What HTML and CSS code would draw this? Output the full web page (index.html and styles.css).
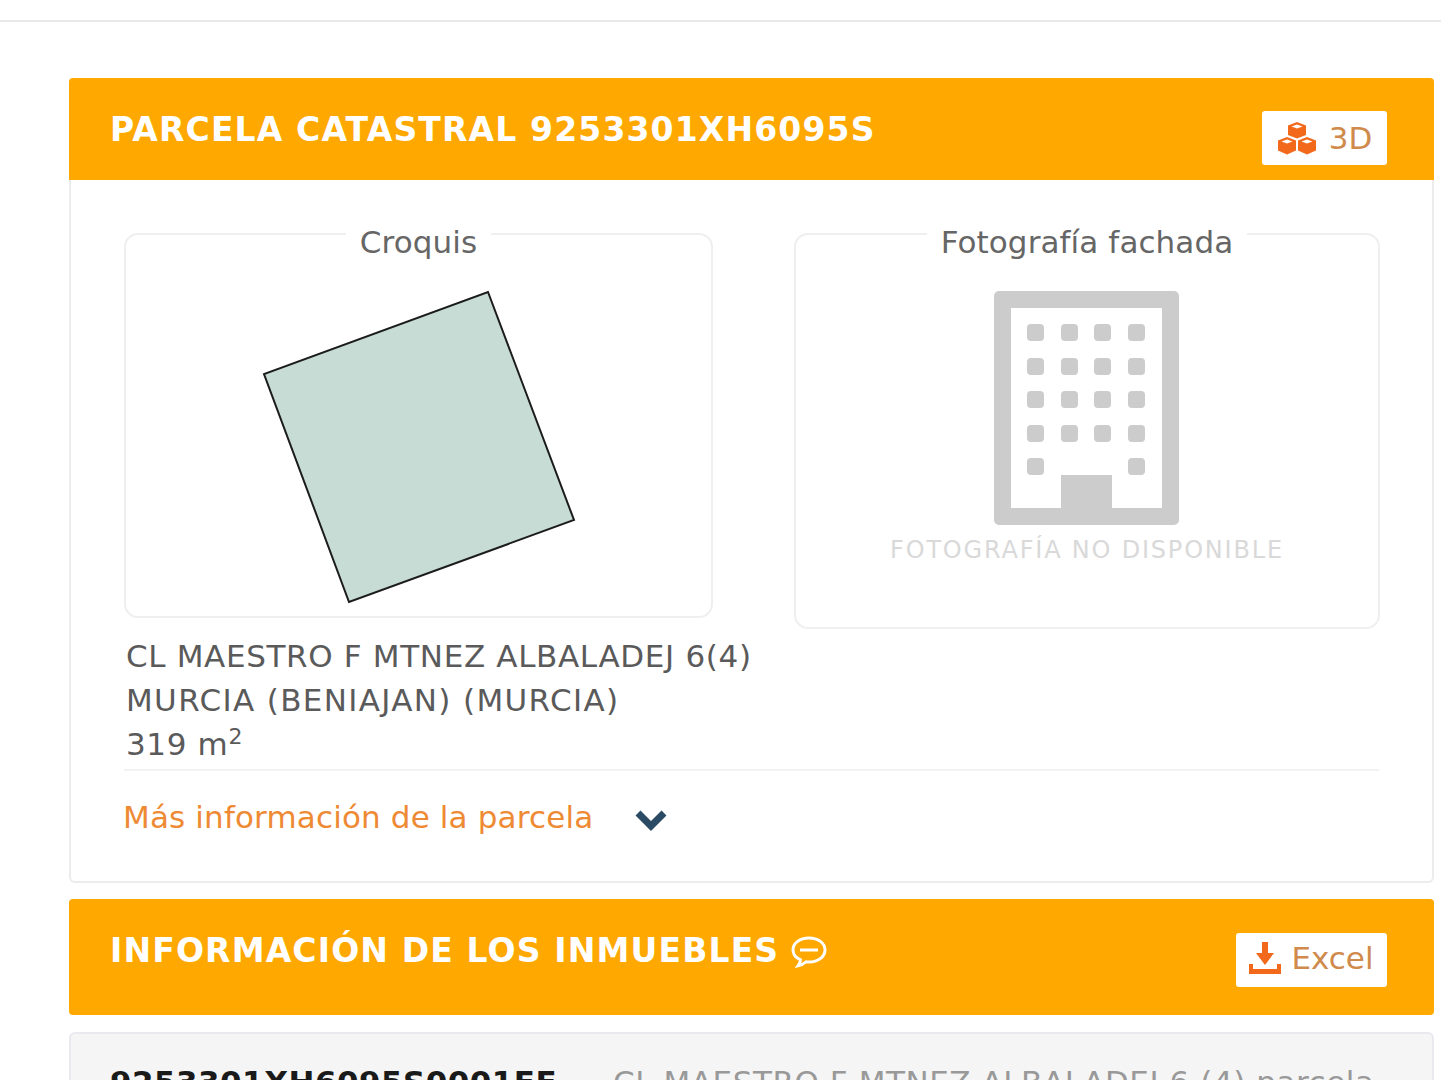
FILE: index.html
```html
<!DOCTYPE html>
<html lang="es">

<head>
  <meta charset="UTF-8">
  <meta name="viewport" content="width=device-width, initial-scale=1.0">
  <title>Parcela catastral 9253301XH6095S</title>
  <link rel="stylesheet" href="styles.css">
</head>

<body>
  <div class="topbar"></div>

  <div class="main">
    <div class="panel-head head-parcela">
      <div class="panel-title">PARCELA CATASTRAL 9253301XH6095S</div>
      <a class="head-btn btn-3d">
        <svg class="icon-cubes" viewBox="0 0 40 34">
          <path fill="#f2691c" d="M20 0l9 3.500v9.500l-9 3.500-9-3.500v-9.500z"/>
          <path fill="#fff" d="M20 2.500l5.500 2-5.500 2-5.500-2z"/>
          <path fill="#f2691c" d="M10 15l9 3.500v10l-9 4-9-4v-10z"/>
          <path fill="#fff" d="M10 17.500l5.500 2-5.500 2-5.500-2z"/>
          <path fill="#f2691c" d="M30 15l9 3.500v10l-9 4-9-4v-10z"/>
          <path fill="#fff" d="M30 17.500l5.500 2-5.500 2-5.500-2z"/>
        </svg>
        <span>3D</span>
      </a>
    </div>

    <div class="panel-body">
      <div class="photo-grid">
        <div class="photo-col">
          <fieldset class="photo-box box-croquis">
            <legend>Croquis</legend>
            <svg class="croquis" viewBox="253 282 330 330">
              <polygon points="487,292 573,520 348,602 263,374" fill="#c6dcd4" stroke="#1c1c1c" stroke-width="2"/>
            </svg>
          </fieldset>
          <div class="address">
            CL MAESTRO F MTNEZ ALBALADEJ 6(4)<br>
            <span class="addr-city">MURCIA (BENIAJAN) (MURCIA)</span><br>
            319 m<sup>2</sup>
          </div>
        </div>

        <div class="photo-col">
          <fieldset class="photo-box box-fachada">
            <legend>Fotografía fachada</legend>
            <svg class="building" viewBox="0 0 185 234">
              <path fill="#cccccc" fill-rule="evenodd" d="M5 0h175a5 5 0 0 1 5 5v224a5 5 0 0 1-5 5h-175a5 5 0 0 1-5-5v-224a5 5 0 0 1 5-5zM17 17v200h50v-33h51v33h50v-200z"/>
              <g fill="#cccccc">
                <rect x="33" y="33" width="17" height="17" rx="4"/>
                <rect x="67" y="33" width="17" height="17" rx="4"/>
                <rect x="100" y="33" width="17" height="17" rx="4"/>
                <rect x="134" y="33" width="17" height="17" rx="4"/>
                <rect x="33" y="67" width="17" height="17" rx="4"/>
                <rect x="67" y="67" width="17" height="17" rx="4"/>
                <rect x="100" y="67" width="17" height="17" rx="4"/>
                <rect x="134" y="67" width="17" height="17" rx="4"/>
                <rect x="33" y="100" width="17" height="17" rx="4"/>
                <rect x="67" y="100" width="17" height="17" rx="4"/>
                <rect x="100" y="100" width="17" height="17" rx="4"/>
                <rect x="134" y="100" width="17" height="17" rx="4"/>
                <rect x="33" y="134" width="17" height="17" rx="4"/>
                <rect x="67" y="134" width="17" height="17" rx="4"/>
                <rect x="100" y="134" width="17" height="17" rx="4"/>
                <rect x="134" y="134" width="17" height="17" rx="4"/>
                <rect x="33" y="167" width="17" height="17" rx="4"/>
                <rect x="134" y="167" width="17" height="17" rx="4"/>
              </g>
            </svg>
            <div class="no-photo">FOTOGRAFÍA NO DISPONIBLE</div>
          </fieldset>
        </div>
      </div>

      <div class="more-row">
        <a class="more-link">Más información de la parcela</a>
        <svg class="chevron" viewBox="0 0 32 24">
          <path fill="none" stroke="#2b4a63" stroke-width="7" d="M3 5l13 13 13-13"/>
        </svg>
      </div>
    </div>

    <div class="panel-head head-inmuebles">
      <div class="panel-title">
        INFORMACIÓN DE LOS INMUEBLES
        <svg class="icon-comment" viewBox="0 0 36 32">
          <path fill="none" stroke="#fff" stroke-width="3" d="M18 2c9 0 16 5 16 12s-7 12-16 12c-1 0-2 0-3-.2-2 2-5 3.500-8 4 1.500-2 2.500-4 2.500-6-4.500-2-7.500-5.500-7.500-9.800 0-7 7-12 16-12z"/>
          <path stroke="#fff" stroke-width="3" d="M9 14h18"/>
        </svg>
      </div>
      <a class="head-btn btn-excel">
        <svg class="icon-download" viewBox="0 0 32 32">
          <path fill="#f2691c" d="M13 0h6v11h6l-9 12-9-12h6z"/>
          <path fill="#f2691c" d="M0 22h4v5h24v-5h4v10h-32z"/>
        </svg>
        <span>Excel</span>
      </a>
    </div>

    <div class="row-item">
      <span class="row-ref">9253301XH6095S0001FF</span>
      <span class="row-addr">CL MAESTRO F MTNEZ ALBALADEJ 6 (4) parcela</span>
    </div>
  </div>
</body>

</html>
```

FILE: styles.css
```css
* {
  margin: 0;
  padding: 0;
  box-sizing: border-box;
}

html,
body {
  height: 1080px;
  overflow: hidden;
}

body {
  font-family: "DejaVu Sans", "Liberation Sans", sans-serif;
  background: #fff;
  color: #555;
}

.topbar {
  height: 22px;
  border-bottom: 2px solid #e9e9e9;
}

.main {
  padding: 56px 7px 0 69px;
}

.panel-head {
  display: flex;
  justify-content: space-between;
  background: #ffa800;
  padding: 0 47px 0 41px;
  border-radius: 4px 4px 0 0;
}

.head-parcela {
  height: 102px;
  padding-top: 33px;
}

.head-inmuebles {
  height: 116px;
  margin-top: 16px;
  padding-top: 33px;
  border-radius: 4px;
}

.panel-title {
  display: flex;
  align-items: flex-start;
  gap: 12px;
  font-size: 33px;
  font-weight: 700;
  line-height: 38px;
  letter-spacing: 1.15px;
  color: #fff;
}

.head-btn {
  display: flex;
  align-items: center;
  justify-content: center;
  gap: 12px;
  height: 54px;
  background: #fff;
  border-radius: 3px;
  font-size: 31px;
  letter-spacing: 0;
  color: #cf8a4c;
}

.btn-3d {
  width: 125px;
}

.btn-excel {
  width: 151px;
  gap: 10px;
  margin-top: 1px;
  padding-bottom: 4px;
}

.icon-cubes {
  width: 40px;
  height: 34px;
  margin-top: 2px;
}

.icon-download {
  width: 32px;
  height: 32px;
}

.icon-comment {
  width: 36px;
  height: 32px;
  margin-top: 4px;
}

.panel-body {
  height: 703px;
  padding: 28px 53px 0;
  border: 2px solid #ececec;
  border-top: 0;
  border-radius: 0 0 6px 6px;
}

.photo-grid {
  display: grid;
  grid-template-columns: 646px 586px;
  column-gap: 24px;
  padding-bottom: 3px;
  border-bottom: 2px solid #f2f2f2;
}

.photo-box {
  border: 2px solid #efefef;
  border-radius: 14px;
  text-align: center;
}

.photo-box legend {
  margin: 0 auto;
  padding: 16px 14px 0;
  font-size: 31px;
  line-height: 36px;
  letter-spacing: 0.1px;
  color: #666;
}

.box-croquis {
  width: 589px;
  height: 410px;
}

.box-fachada {
  height: 421px;
}

.croquis {
  display: block;
  width: 330px;
  height: 330px;
  margin: 22px auto 0;
}

.building {
  display: block;
  width: 185px;
  height: 234px;
  margin: 31px 0 0 198px;
}

.no-photo {
  margin-top: 10px;
  font-size: 24px;
  line-height: 30px;
  letter-spacing: 1.8px;
  color: #d9d9d9;
  white-space: nowrap;
}

.address {
  margin-top: 16px;
  padding-left: 2px;
  font-size: 31px;
  line-height: 44px;
  letter-spacing: 0.65px;
  color: #5a5a5a;
  white-space: nowrap;
}

.addr-city {
  letter-spacing: 1.35px;
}

.address sup {
  font-size: 22px;
  line-height: 0;
}

.more-row {
  display: flex;
  align-items: center;
  gap: 42px;
  margin-top: 26px;
}

.more-link {
  margin-left: -1px;
  font-size: 31px;
  line-height: 40px;
  letter-spacing: 0.15px;
  color: #ee8a34;
}

.chevron {
  width: 32px;
  height: 24px;
  margin-top: 6px;
}

.row-item {
  display: flex;
  gap: 56px;
  height: 200px;
  margin-top: 17px;
  padding: 28px 39px;
  background: #f5f5f5;
  border: 2px solid #e9e9ef;
  border-radius: 6px;
  font-size: 31px;
  line-height: 40px;
  white-space: nowrap;
}

.row-ref {
  font-weight: 700;
  letter-spacing: 0.45px;
  color: #1a1a1a;
}

.row-addr {
  letter-spacing: 0.55px;
  color: #999;
}
```
